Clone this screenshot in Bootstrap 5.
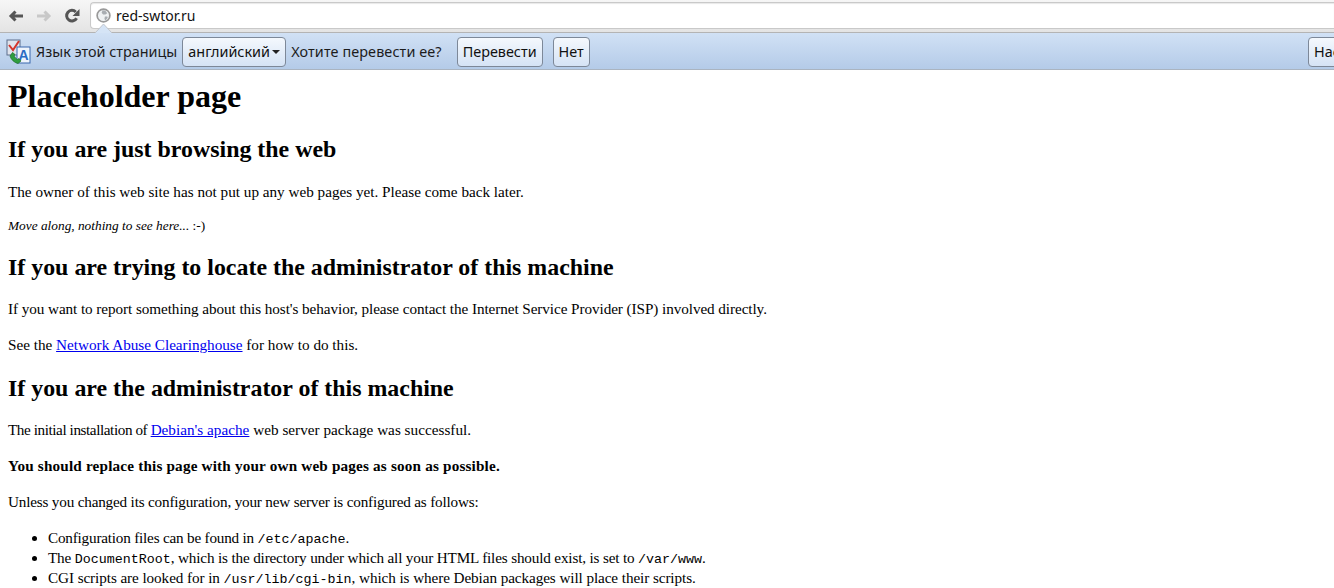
<!DOCTYPE html>
<html lang="en"><head><meta charset="utf-8"><title>Placeholder page</title>
<link href="https://cdn.jsdelivr.net/npm/bootstrap@5.3.0/dist/css/bootstrap.min.css" rel="stylesheet">
<style>
html,body{height:588px;overflow:hidden;background:#fff}
body{font-family:"Liberation Serif","Times New Roman",serif;font-size:15.2px;line-height:20px;color:#000}
.chrome-ui{font-family:"Noto Sans","Open Sans",sans-serif;font-size:14.4px;color:#222}
.toolbar{height:33px;background:linear-gradient(#f6f6f6,#e4e4e4);border-bottom:1px solid #b4b4b4;padding:2px 0 0 0;position:relative}
.navbtns{width:90px;height:27px;padding-left:8px;gap:12px;flex:none}
.omnibox{flex:1;background:#fff;border:1px solid #c9c9c9;border-right:0;border-radius:4px 0 0 4px;height:27px;padding-left:5px;gap:5px;font-size:14px;color:#111;box-shadow:inset 0 1px 1px #e8e8e8}
.notch{position:absolute;left:95px;bottom:-1px;width:17px;height:9px}
.infobar{height:37px;background:linear-gradient(#d1e1f5,#b4cbe8);border-bottom:1px solid #aab4c0;padding:2px 0 0 5px;overflow:hidden;color:#1c1c1c}
.ibtn{height:30px;padding:0 5px;border:1px solid #7d8898;border-radius:4px;background:linear-gradient(#f4f8fd,#d5e3f5);color:#111;white-space:nowrap;flex:none;display:flex;align-items:center;font-size:14.4px}
.ibtn.lang-btn{padding-right:4px;width:104px}
.caret-mark{width:0;height:0;border-left:4px solid transparent;border-right:4px solid transparent;border-top:4px solid #222;margin-left:2px}
.gap-lg{margin-left:15px}
.gap-md{margin-left:10px}
.gap-sm{margin-left:5px}
.wide-text{letter-spacing:.1px}
.cut-btn{margin-left:auto;margin-right:-60px;width:86px}
.content{padding:0 8px}
.content h1{font-size:32px;font-weight:700;line-height:34px;margin:9px 0 0}
.content h2{font-size:23.9px;font-weight:700;line-height:28px;margin:19px 0 18px}
.content h2.first-head{margin:22px 0 19px}
.content p{margin:0 0 16px}
.content a{color:#00e;text-decoration:underline}
.content code{font-family:"Liberation Mono","Courier New",monospace;font-size:13.33px;line-height:0;color:#000;letter-spacing:0}
.content ul{margin:0;padding-left:40px}
.content p.note{font-size:13.33px;line-height:16px}
.ls-a{letter-spacing:-.07px}
.ls-b{letter-spacing:.02px}
.ls-c{letter-spacing:.18px}
.ls-d{letter-spacing:-.185px}
.ls-e{letter-spacing:-.2px}
.ls-f{letter-spacing:-.16px}
.ls-g{letter-spacing:-.08px}
.ls-h{letter-spacing:-.42px}
</style></head>
<body>
<div class="chrome-ui">
 <div class="toolbar d-flex align-items-start">
  <div class="navbtns d-flex align-items-center">
   <svg width="16" height="14" viewBox="0 0 16 14"><path d="M15 7H3.500M7.500 2.500L3 7l4.500 4.500" fill="none" stroke="#555" stroke-width="3"/></svg>
   <svg width="16" height="14" viewBox="0 0 16 14"><path d="M1 7h11.500M8.500 2.500L13 7l-4.500 4.500" fill="none" stroke="#c8c8c8" stroke-width="3"/></svg>
   <svg width="16" height="16" viewBox="0 0 16 16"><path d="M12.600 10.200A5.300 5.300 0 1 1 11.800 4" fill="none" stroke="#555" stroke-width="3"/><path d="M15.500 1v7H8.500z" fill="#555"/></svg>
  </div>
  <div class="omnibox d-flex align-items-center">
   <svg width="15" height="15" viewBox="0 0 16 16"><circle cx="8" cy="8" r="6.800" fill="#eef1f3" stroke="#999" stroke-width="1.800"/><path d="M7 2.500l3 .5 2 2.500-2 1.500-2.500 0-1.500-2zM9.500 9l2.500 0 .5 1.500-2.500 3-1-2z" fill="#a8adb2"/></svg>
   <span>red-swtor.ru</span>
  </div>
  <svg class="notch" viewBox="0 0 17 9"><path d="M0 9L8.500 0 17 9z" fill="#d5e4f6"/><path d="M0 9L8.500 0 17 9" fill="none" stroke="#c0c4ca"/></svg>
 </div>
 <div class="infobar d-flex align-items-center">
  <svg width="26" height="26" viewBox="0 0 26 26" class="flex-none"><rect x="2" y="1" width="13" height="15" fill="#dfe3ec" stroke="#5d6f8c"/><path d="M4 6l4 5 6-9" fill="none" stroke="#d4342a" stroke-width="2"/><rect x="12" y="8" width="13" height="16" fill="#eef4fc" stroke="#3a68ad"/><text x="18.500" y="21" text-anchor="middle" font-family="Liberation Sans" font-size="14" font-weight="700" fill="#2a6cc4">A</text><path d="M5 17l2.500-3.500 2.500 2-1 1.500c.8 1.500 2 2.700 3.500 3.500l1.500-1 2 2.500-3 2.500c-4-1-7-4-8-7.500z" fill="#2f9e3f" stroke="#1d6e2a" stroke-width=".7"/></svg>
  <span class="gap-sm text-nowrap">Язык этой страницы</span>
  <div class="ibtn lang-btn gap-sm">английский<span class="caret-mark"></span></div>
  <span class="gap-sm text-nowrap wide-text">Хотите перевести ее?</span>
  <div class="ibtn gap-lg">Перевести</div>
  <div class="ibtn gap-md">Нет</div>
  <div class="ibtn cut-btn">Настройки</div>
 </div>
</div>
<div class="content">
 <h1>Placeholder page</h1>
 <h2 class="first-head">If you are just browsing the web</h2>
 <p>The owner of this web site has not put up any web pages yet. Please come back later.</p>
 <p class="note"><em>Move along, nothing to see here...</em> :-)</p>
 <h2>If you are trying to locate the administrator of this machine</h2>
 <p class="ls-a">If you want to report something about this host's behavior, please contact the Internet Service Provider (ISP) involved directly.</p>
 <p>See the <a href="#">Network Abuse Clearinghouse</a> for how to do this.</p>
 <h2>If you are the administrator of this machine</h2>
 <p class="ls-b"><span class="ls-h">The initial installation of </span><a href="#">Debian's apache</a> web server package was successful.</p>
 <p class="ls-c"><strong>You should replace this page with your own web pages as soon as possible.</strong></p>
 <p class="ls-d">Unless you changed its configuration, your new server is configured as follows:</p>
 <ul>
  <li class="ls-e">Configuration files can be found in <code>/etc/apache</code>.</li>
  <li class="ls-f">The <code>DocumentRoot</code>, which is the directory under which all your HTML files should exist, is set to <code>/var/www</code>.</li>
  <li class="ls-g">CGI scripts are looked for in <code>/usr/lib/cgi-bin</code>, which is where Debian packages will place their scripts.</li>
 </ul>
</div>
</body></html>
